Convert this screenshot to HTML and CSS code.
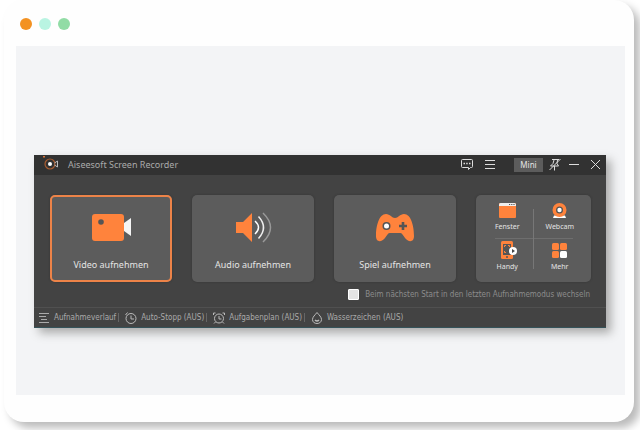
FILE: index.html
```
<!DOCTYPE html>
<html lang="de">
<head>
<meta charset="utf-8">
<title>Aiseesoft Screen Recorder</title>
<link rel="stylesheet" href="styles.css">
</head>
<body>
<main class="frame">
  <div class="dots"><span class="dot dot-orange"></span><span class="dot dot-mint"></span><span class="dot dot-green"></span></div>
  <div class="stage">
    <section class="app">
      <header class="titlebar">
        <svg class="logo" width="18" height="18" viewBox="0 0 18 18" fill="none"><circle cx="8" cy="8" r="5" stroke="#a85c30" stroke-width="1.200"/><circle cx="8" cy="8" r="2" fill="#fff"/><path d="M1 0h2v1.500H1z" fill="#d97236"/><path d="M12.500 7l3-2v6l-3-2" stroke="#bbb"/></svg>
        <h1 class="title">Aiseesoft Screen Recorder</h1>
        <button class="tool" aria-label="Feedback"><svg width="14" height="14" viewBox="0 0 14 14" fill="none" stroke="#ddd"><path d="M2.500 1.500h9q1 0 1 1v6q0 1-1 1h-1l-2 2v-2h-6q-1 0-1-1v-6q0-1 1-1z"/><path d="M3.500 5.500h1.500M6.200 5.500h1.500M9 5.500h1.500" stroke-width="1.500"/></svg></button>
        <button class="tool tool-menu" aria-label="Menü"><svg width="14" height="14" viewBox="0 0 14 14" stroke="#ddd"><path d="M2 2.500h10M2 6.500h10M2 10.500h10"/></svg></button>
        <button class="mini">Mini</button>
        <button class="tool" aria-label="Anheften"><svg width="14" height="14" viewBox="0 0 14 14" fill="none" stroke="#ddd"><path d="M4 1.500h7M6 2L5 5.500 2.500 8h8L9 5.500 9.500 2M6.500 8v4.500M12.500 1L1.500 12"/></svg></button>
        <button class="tool" aria-label="Minimieren"><svg width="14" height="14" viewBox="0 0 14 14" stroke="#ddd"><path d="M2 6.500h10"/></svg></button>
        <button class="tool tool-close" aria-label="Schließen"><svg width="14" height="14" viewBox="0 0 14 14" stroke="#ddd"><path d="M3 2l9 9M12 2l-9 9"/></svg></button>
      </header>
      <div class="modes">
        <button class="tile tile-active">
          <svg width="44" height="32" viewBox="0 0 44 32"><rect x="3" y="3" width="32" height="27" rx="3" fill="#ff833c"/><circle cx="12" cy="11" r="2.800" fill="#555"/><path d="M35 12l7-5v18l-7-5z" fill="#f5f5f5"/></svg>
          <span>Video aufnehmen</span>
        </button>
        <button class="tile">
          <svg width="44" height="32" viewBox="0 0 44 32" fill="none" stroke-width="1.500"><path d="M5 11h7l9-9v29l-9-9H5z" fill="#ff833c"/><path d="M24 10q7 6.500 0 13" stroke="#fff"/><path d="M27.500 5.500q10 11 0 22" stroke="#eee"/><path d="M32 2q15 14.500 0 29" stroke="#999"/></svg>
          <span>Audio aufnehmen</span>
        </button>
        <button class="tile">
          <svg width="44" height="32" viewBox="0 0 44 32"><path d="M13 3c4 0 6 4 9 4s5-4 9-4c7 0 10 12 10 22 0 7-6 6-9 2-2-3-3-5-5-5H17c-2 0-3 2-5 5-3 4-9 5-9-2C3 15 6 3 13 3z" fill="#ff833c"/><circle cx="13.500" cy="15" r="4" fill="#555"/><circle cx="13.500" cy="15" r="2.500" fill="#fff"/><path d="M30 11v8M26 15h8" stroke="#555" stroke-width="2.600"/></svg>
          <span>Spiel aufnehmen</span>
        </button>
        <div class="more">
          <button class="cell"><svg width="20" height="18" viewBox="0 0 20 18"><rect x="2" y="2" width="17" height="15" rx="1" fill="#ff833c"/><path d="M2 3.500q0-1.500 1.500-1.500h14q1.500 0 1.500 1.500V5H2z" fill="#eee"/><path d="M12 3.500h1.200M14.200 3.500h1.200M16.400 3.500h1.200" stroke="#555"/></svg><span>Fenster</span></button>
          <button class="cell"><svg width="20" height="18" viewBox="0 0 20 18"><path d="M4 14.500h11l1 2.500H3z" fill="#fff"/><circle cx="9.500" cy="9" r="7" fill="#ff833c"/><circle cx="9.500" cy="9" r="3.500" fill="#555"/><circle cx="9.500" cy="9" r="2.200" fill="#fff"/></svg><span>Webcam</span></button>
          <button class="cell"><svg width="20" height="18" viewBox="0 0 20 18"><rect x="4" width="12" height="18" rx="1.500" fill="#ff833c"/><rect x="6" y="3" width="8" height="11" fill="#555"/><path d="M7.500 6V4.500H9M11 4.500h1.500V6M7.500 10v1.500H9" stroke="#ff833c" fill="none"/><circle cx="10" cy="16" r="1" fill="#555"/><circle cx="16" cy="10" r="4" fill="#fff"/><path d="M15 8l3 2-3 2z" fill="#444"/></svg><span>Handy</span></button>
          <button class="cell"><svg width="20" height="18" viewBox="0 0 20 18" fill="#ff833c"><rect x="2" y="2" width="7" height="7" rx="1.500"/><rect x="10" y="2" width="7" height="7" rx="1.500"/><rect x="2" y="10" width="7" height="7" rx="1.500"/><rect x="10" y="10" width="7" height="7" rx="1.500" fill="#fff"/></svg><span>Mehr</span></button>
        </div>
      </div>
      <label class="remember"><input type="checkbox">Beim nächsten Start in den letzten Aufnahmemodus wechseln</label>
      <footer class="footer">
        <button class="link"><svg width="12" height="12" viewBox="0 0 12 12" stroke="#aaa"><path d="M1 1.500h10M1 4.500h7M3 7.500h6M1 10.500h10"/></svg>Aufnahmeverlauf</button>
        <button class="link"><svg width="12" height="12" viewBox="0 0 12 12" fill="none" stroke="#bbb"><circle cx="6" cy="6.500" r="5"/><path d="M6 3.500v3.500h3M.5 3l2-2.500"/></svg>Auto-Stopp (AUS)</button>
        <button class="link"><svg width="12" height="12" viewBox="0 0 12 12" fill="none" stroke="#bbb"><circle cx="6" cy="6.500" r="4.500"/><path d="M6 4v3h2.500M.5 3V1h2M11.500 3V1h-2M2.500 10L1 11.500M9.500 10l1.500 1.500"/></svg>Aufgabenplan (AUS)</button>
        <button class="link"><svg width="12" height="12" viewBox="0 0 12 12" fill="none" stroke="#bbb"><path d="M6 .5C4 3 1.500 5 1.500 7.500 1.500 10 3.500 11.500 6 11.500s4.500-1.500 4.500-4C10.500 5 8 3 6 .5z"/><path d="M4 8q2 2 4 0" stroke-width="1.500"/></svg>Wasserzeichen (AUS)</button>
      </footer>
    </section>
  </div>
</main>
</body>
</html>
```
FILE: styles.css
```
* {
  box-sizing: border-box;
}

body {
  margin: 0;
  background: #fff;
  font-family: "Noto Sans", "Open Sans", sans-serif;
}

button {
  margin: 0;
  padding: 0;
  border: 0;
  background: none;
  color: inherit;
  font: inherit;
}

svg {
  display: block;
  flex: none;
}

.frame {
  margin: 0 6px 8px 4px;
  padding: 18px 9px 27px 12px;
  border-radius: 20px;
  background: #fefefe;
  box-shadow: 6px 6px 8px #bbb;
}

.dots {
  display: flex;
  gap: 7px;
  padding: 0 4px 16px;
}

.dot {
  width: 12px;
  height: 12px;
  border-radius: 50%;
}

.dot-orange { background: #f39222; }
.dot-mint { background: #b9f4e2; }
.dot-green { background: #91dca5; }

.stage {
  padding: 109px 19px 67px 18px;
  background: #f3f4f6;
}

.app {
  background: #434343;
  color: #e4e4e4;
  box-shadow: 5px 5px 9px #aaa;
}

.titlebar {
  display: flex;
  align-items: center;
  gap: 5px;
  height: 20px;
  padding: 0 4px 0 8px;
  background: #323232;
}

.title {
  flex: 1;
  margin: 0 0 0 3px;
  color: #aaa;
  font-size: 9px;
  line-height: 12px;
  font-weight: 400;
}

.tool-menu {
  margin: 0 12px 0 4px;
}

.tool-close {
  margin-left: 2px;
}

.mini {
  width: 29px;
  height: 14px;
  background: #5c5c5c;
  font-size: 8px;
  line-height: 14px;
}

.modes {
  display: grid;
  grid-template-columns: 122fr 122fr 122fr 115fr;
  gap: 20px;
  padding: 20px 15px 0 16px;
}

.tile {
  display: flex;
  flex-direction: column;
  align-items: center;
  gap: 16px;
  height: 87px;
  padding-top: 16px;
  border-radius: 5px;
  background: #5c5c5c;
  box-shadow: 0 0 2px #333;
  font-size: 9px;
  line-height: 12px;
}

.tile-active {
  outline: 2px solid #ed8348;
  outline-offset: -2px;
}

.more {
  display: grid;
  grid-template-columns: 1fr 1fr;
  align-content: start;
  padding: 6px 5px 0;
  border-radius: 5px;
  background:
    linear-gradient(#777, #777) center / 1px 60px no-repeat,
    linear-gradient(#6e6e6e, #6e6e6e) center / 78px 1px no-repeat,
    #5c5c5c;
  box-shadow: 0 0 2px #333;
}

.cell {
  display: flex;
  flex-direction: column;
  align-items: center;
  gap: 3px;
  height: 40px;
  font-size: 7px;
  line-height: 10px;
}

.remember,
.footer {
  font-family: "DejaVu Sans Condensed", "DejaVu Sans", sans-serif;
  font-size: 8px;
}

.remember {
  display: flex;
  align-items: center;
  justify-content: flex-end;
  gap: 6px;
  height: 25px;
  padding: 0 16px 0 0;
  color: #8c8c8c;
}

.remember input {
  appearance: none;
  width: 11px;
  height: 11px;
  margin: 0;
  border: 1px solid #fff;
  border-radius: 1px;
  background: #e4e4e4;
}

.footer {
  display: flex;
  align-items: center;
  height: 21px;
  padding: 0 4px;
  border-top: 1px solid #505050;
  border-bottom: 1px solid #35535a;
  color: #aaa;
}

.link {
  display: flex;
  align-items: center;
  gap: 4px;
}

.link + .link::before {
  content: "";
  height: 9px;
  margin: 0 2px;
  border-left: 1px solid #666;
}
```
